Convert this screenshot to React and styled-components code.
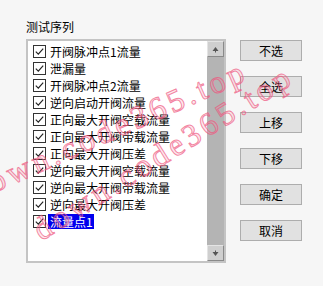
import React from 'react';
import styled, { createGlobalStyle } from 'styled-components';

const Global = createGlobalStyle`
  html, body { margin: 0; padding: 0; background: #f6f6f6; }
  body {
    font-family: "Noto Sans CJK SC", "Microsoft YaHei", sans-serif;
    font-size: 12px;
    color: #000;
  }
`;

const Page = styled.div`
  position: relative;
  width: 323px;
  height: 286px;
  overflow: hidden;
  display: flex;
  align-items: flex-start;
  padding: 19px 0 0 26px;
  box-sizing: border-box;
`;

const Group = styled.div`
  display: flex;
  flex-direction: column;
  width: 200px;
`;

const Title = styled.div`
  height: 16px;
  line-height: 16px;
  margin-bottom: 4px;
`;

const ListBox = styled.div`
  height: 224px;
  box-sizing: border-box;
  display: flex;
  border: 2px solid #c4c4c4;
  background: #fff;
`;

const Items = styled.div`
  flex: 1;
  padding: 2px 0 0 5px;
  display: flex;
  flex-direction: column;
`;

const Row = styled.div`
  height: 17px;
  display: flex;
  align-items: center;
`;

const Box = styled.span`
  width: 13px;
  height: 13px;
  box-sizing: border-box;
  border: 1px solid #333;
  background: #fff;
  display: flex;
  align-items: center;
  justify-content: center;
  flex: none;
`;

const Label = styled.span`
  margin-left: 2px;
  padding: 0 1px 0 2px;
  line-height: 15px;
  height: 15px;
  white-space: nowrap;
  background: ${p => (p.$selected ? '#0000ee' : 'transparent')};
  color: ${p => (p.$selected ? '#fff' : '#000')};
`;

const ScrollBar = styled.div`
  width: 17px;
  display: flex;
  flex-direction: column;
  background: #b4b4b4;
`;

const ScrollBtn = styled.div`
  height: 16px;
  box-sizing: border-box;
  background: #cfcfcf;
  border: 1px solid;
  border-color: #e4e4e4 #8a8a8a #8a8a8a #e4e4e4;
  display: flex;
  align-items: center;
  justify-content: center;
  margin-top: ${p => (p.$bottom ? 'auto' : '0')};
`;

const Buttons = styled.div`
  display: flex;
  flex-direction: column;
  gap: 15px;
  margin-left: 14px;
  padding-top: 21px;
`;

const Button = styled.button`
  width: 62px;
  height: 21px;
  box-sizing: border-box;
  background: #e1e1e1;
  border: 1px solid #adadad;
  font-family: inherit;
  font-size: 12px;
  color: #000;
  padding: 0;
  line-height: 19px;
`;

const Watermarks = styled.div`
  position: absolute;
  inset: 0;
  pointer-events: none;
  overflow: hidden;
`;

const Mark = styled.span`
  position: absolute;
  left: ${p => p.$x}px;
  top: ${p => p.$y}px;
  font-family: "Liberation Serif", serif;
  font-size: 32px;
  letter-spacing: 4px;
  line-height: 1;
  white-space: nowrap;
  color: rgba(245, 130, 160, 0.2);
  -webkit-text-stroke: 1px rgba(238, 85, 125, 0.7);
  transform-origin: 0 28px;
  transform: rotate(${p => p.$angle}deg);
`;

const Check = () => (
  <svg width="11" height="11" viewBox="0 0 11 11">
    <path d="M1.8 5.6 L4.3 8.1 L9.2 2.6" fill="none" stroke="#222" strokeWidth="1.2" />
  </svg>
);

const Arrow = ({ down }) => (
  <svg width="7" height="7" viewBox="0 0 7 7" style={down ? { transform: 'rotate(180deg)' } : undefined}>
    <path d="M3.5 1 L6.5 5 L0.5 5 Z" fill="#555" />
    <rect x="3" y="5" width="1" height="1.5" fill="#555" />
  </svg>
);

const items = [
  '开阀脉冲点1流量',
  '泄漏量',
  '开阀脉冲点2流量',
  '逆向启动开阀流量',
  '正向最大开阀空载流量',
  '正向最大开阀带载流量',
  '正向最大开阀压差',
  '逆向最大开阀空载流量',
  '逆向最大开阀带载流量',
  '逆向最大开阀压差',
  '流量点1',
];

const buttons = ['不选', '全选', '上移', '下移', '确定', '取消'];

export default function App() {
  return (
    <>
      <Global />
      <Page>
        <Group>
          <Title>测试序列</Title>
          <ListBox>
            <Items>
              {items.map((t, i) => (
                <Row key={t}>
                  <Box><Check /></Box>
                  <Label $selected={i === items.length - 1}>{t}</Label>
                </Row>
              ))}
            </Items>
            <ScrollBar>
              <ScrollBtn><Arrow /></ScrollBtn>
              <ScrollBtn $bottom><Arrow down /></ScrollBtn>
            </ScrollBar>
          </ListBox>
        </Group>
        <Buttons>
          {buttons.map(b => (
            <Button key={b}>{b}</Button>
          ))}
        </Buttons>
        <Watermarks>
          <Mark $x={-24} $y={174} $angle={-24}>down.code365.top</Mark>
          <Mark $x={42} $y={214} $angle={-32}>down.code365.top</Mark>
        </Watermarks>
      </Page>
    </>
  );
}
